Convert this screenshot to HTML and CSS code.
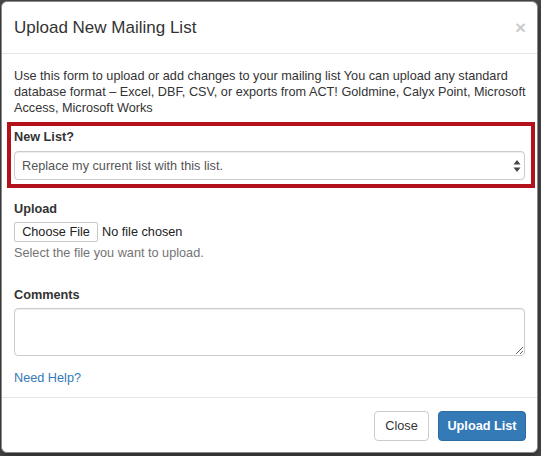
FILE: index.html
```html
<!DOCTYPE html>
<html>
<head>
<meta charset="utf-8">
<link rel="stylesheet" href="styles.css">
</head>
<body>
<div class="modal">
  <div class="modal-header">
    <h4 class="modal-title">Upload New Mailing List</h4>
    <span class="close">×</span>
  </div>
  <div class="modal-body">
    <p class="intro">Use this form to upload or add changes to your mailing list You can upload any standard database format – Excel, DBF, CSV, or exports from ACT! Goldmine, Calyx Point, Microsoft Access, Microsoft Works</p>
    <div class="highlight">
      <label class="label">New List?</label>
      <div class="select-wrap">
        <div class="select">Replace my current list with this list.</div>
        <svg class="arrows" width="8" height="14" viewBox="0 0 8 14"><path d="M4 1 L7.5 5.5 L0.5 5.5 Z" fill="#444"/><path d="M4 13 L7.5 8.5 L0.5 8.5 Z" fill="#444"/></svg>
      </div>
    </div>
    <div class="group upload">
      <label class="label">Upload</label>
      <div class="file-row"><span class="file-btn">Choose File</span><span class="file-name">No file chosen</span></div>
      <div class="help">Select the file you want to upload.</div>
    </div>
    <div class="group comments">
      <label class="label">Comments</label>
      <textarea class="textarea"></textarea>
    </div>
    <a class="link">Need Help?</a>
  </div>
  <div class="modal-footer">
    <span class="btn btn-default">Close</span>
    <span class="btn btn-primary">Upload List</span>
  </div>
</div>
</body>
</html>
```

FILE: styles.css
```css
* { box-sizing: border-box; }
html, body { margin: 0; padding: 0; }
body {
  background: #4a4a4a;
  width: 541px;
  height: 456px;
  overflow: hidden;
  font-family: "Liberation Sans", Arial, sans-serif;
  font-size: 12.7px;
  color: #333;
  padding: 1px 3px 0 1px;
}
.modal {
  background: #fff;
  border: 1px solid #8a8a8a;
  border-radius: 6px;
  height: 452px;
  display: flex;
  flex-direction: column;
  box-shadow: 0 3px 9px rgba(0,0,0,.5);
}
.modal-header {
  height: 52px;
  border-bottom: 1px solid #e5e5e5;
  display: flex;
  align-items: center;
  justify-content: space-between;
  padding: 0 11px 0 12px;
  flex: none;
}
.modal-title {
  margin: 0;
  font-size: 17px;
  font-weight: normal;
  color: #333;
  line-height: 20px;
  padding-top: 1px;
}
.close {
  font-size: 19px;
  font-weight: bold;
  color: #000;
  opacity: .2;
  line-height: 20px;
}
.modal-body {
  padding: 14px 12px 10px 12px;
  flex: 1;
}
.intro {
  margin: 0 -5px 6px 0;
  line-height: 16px;
}
.highlight {
  border: 4px solid #b3121a;
  margin: 0 -10px 0 -7px;
  padding: 3px 6px 4px 3px;
}
.label {
  display: block;
  font-weight: bold;
  line-height: 17px;
  margin-bottom: 5px;
}
.select-wrap { position: relative; }
.select {
  height: 29px;
  border: 1px solid #ccc;
  border-radius: 4px;
  box-shadow: inset 0 1px 1px rgba(0,0,0,.075);
  color: #555;
  padding: 0 7px;
  display: flex;
  align-items: center;
}
.arrows {
  position: absolute;
  right: 4px;
  top: 8px;
}
.group.upload { margin-top: 13px; }
.upload .label { margin-bottom: 4px; }
.file-row { display: flex; align-items: center; height: 20px; }
.file-btn {
  height: 20px;
  width: 84px;
  border: 1px solid #c8c8c8;
  border-radius: 2px;
  background: #fff;
  color: #222;
  display: flex;
  align-items: center;
  justify-content: center;
}
.file-name { margin-left: 4px; color: #222; }
.help {
  color: #737373;
  margin-top: 3px;
  line-height: 17px;
}
.group.comments { margin-top: 25px; }
.comments .label { margin-bottom: 4px; }
.textarea {
  display: block;
  width: 100%;
  height: 48px;
  border: 1px solid #ccc;
  border-radius: 4px;
  box-shadow: inset 0 1px 1px rgba(0,0,0,.075);
  margin: 0;
  font: inherit;
}
.link {
  display: block;
  margin-top: 14px;
  color: #337ab7;
  line-height: 17px;
}
.modal-footer {
  border-top: 1px solid #e5e5e5;
  display: flex;
  justify-content: flex-end;
  gap: 9px;
  padding: 13px 11px 0 0;
  height: 55px;
  flex: none;
}
.btn {
  height: 30px;
  border-radius: 4px;
  display: flex;
  align-items: center;
  justify-content: center;
  font-size: 12.7px;
}
.btn-default {
  width: 55px;
  border: 1px solid #ccc;
  color: #333;
  background: #fff;
}
.btn-primary {
  width: 88px;
  background: #337ab7;
  border: 1px solid #2e6da4;
  color: #fff;
  font-weight: bold;
}
```
